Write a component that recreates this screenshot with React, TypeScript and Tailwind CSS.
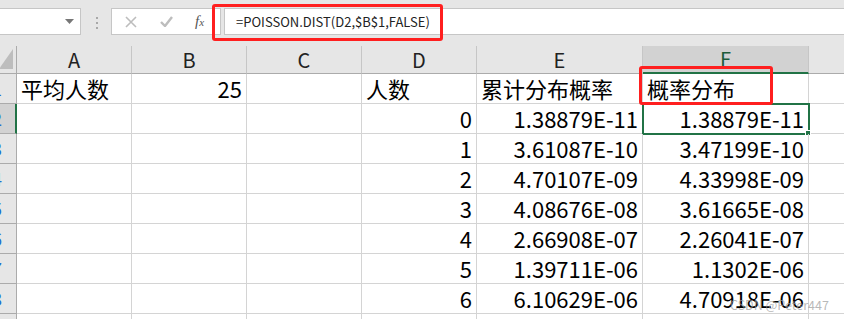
import React from 'react';

const font = "font-['Noto_Sans_CJK_SC',sans-serif]";

const cols = [
    { key: 'A', w: 'w-[115px]' },
    { key: 'B', w: 'w-[115px]' },
    { key: 'C', w: 'w-[115px]' },
    { key: 'D', w: 'w-[115px]' },
    { key: 'E', w: 'w-[166px]' },
    { key: 'F', w: 'w-[166px]' },
];

type Cell = { v: string; right?: boolean };

const t = (v: string): Cell => ({ v });
const n = (v: string): Cell => ({ v, right: true });
const e: Cell = { v: '' };

const rows: Cell[][] = [
    [t('平均人数'), n('25'), e, t('人数'), t('累计分布概率'), t('概率分布')],
    [e, e, e, n('0'), n('1.38879E-11'), n('1.38879E-11')],
    [e, e, e, n('1'), n('3.61087E-10'), n('3.47199E-10')],
    [e, e, e, n('2'), n('4.70107E-09'), n('4.33998E-09')],
    [e, e, e, n('3'), n('4.08676E-08'), n('3.61665E-08')],
    [e, e, e, n('4'), n('2.66908E-07'), n('2.26041E-07')],
    [e, e, e, n('5'), n('1.39711E-06'), n('1.1302E-06')],
    [e, e, e, n('6'), n('6.10629E-06'), n('4.70918E-06')],
    [e, e, e, e, e, e],
];

function FormulaBar() {
    return (
        <div className="flex flex-row items-start h-[46px] pt-[8px] bg-[#e6e6e6]">
            <div className="flex flex-row items-center justify-between w-[81px] h-[27px] bg-white border border-l-0 border-[#c6c6c6] overflow-hidden">
                <span className="-ml-[9px] text-[14px] text-[#1f6fd0]">2</span>
                <svg width="9" height="5" viewBox="0 0 9 5" className="mr-[6px]">
                    <path d="M0 0 L9 0 L4.5 5 Z" fill="#777" />
                </svg>
            </div>
            <div className="flex flex-col gap-[3px] ml-[15px] mr-[13px] mt-[9px]">
                <span className="w-[2px] h-[2px] bg-[#a8a8a8]" />
                <span className="w-[2px] h-[2px] bg-[#a8a8a8]" />
                <span className="w-[2px] h-[2px] bg-[#a8a8a8]" />
            </div>
            <div className="flex flex-row items-center w-[110px] h-[27px] bg-white border border-[#c6c6c6]">
                <svg width="12" height="12" viewBox="0 0 12 12" className="ml-[13px]">
                    <path d="M1 1 L11 11 M11 1 L1 11" stroke="#bdbdbd" strokeWidth="1.6" />
                </svg>
                <svg width="13" height="11" viewBox="0 0 13 11" className="ml-[23px]">
                    <path d="M1 6 L5 10 L12 1" stroke="#bdbdbd" strokeWidth="2.4" fill="none" />
                </svg>
                <span className="ml-[22px] font-['Liberation_Serif',serif] italic text-[15px] text-[#555] leading-none">
                    f<span className="text-[11px]">x</span>
                </span>
            </div>
            <div className="flex-1 flex flex-row items-center ml-[3px] h-[27px] bg-white border border-r-0 border-[#c6c6c6] pl-[11px]">
                <span className={`${font} text-[13px] text-[#222]`}>=POISSON.DIST(D2,$B$1,FALSE)</span>
            </div>
        </div>
    );
}

function HeaderRow() {
    return (
        <div className={`flex flex-row h-[28px] bg-[#e6e6e6] ${font}`}>
            <div className="flex items-end w-[17px] h-full border-r border-b border-[#ababab] overflow-hidden">
                <svg width="14" height="20" viewBox="0 0 14 20" className="mb-[4px] -ml-[1px]">
                    <path d="M14 0 L14 20 L0 20 Z" fill="#bdbdbd" />
                </svg>
            </div>
            {cols.map((c) => (
                <div
                    key={c.key}
                    className={
                        c.key === 'F'
                            ? `${c.w} h-full flex items-center justify-center bg-[#d2d2d2] border-r border-[#c6c6c6] border-b-2 border-b-[#217346] text-[20px] text-[#1d5c3a]`
                            : `${c.w} h-full flex items-center justify-center border-r border-[#c6c6c6] border-b border-b-[#ababab] text-[20px] text-[#222]`
                    }
                >
                    {c.key}
                </div>
            ))}
            <div className="flex-1 h-full border-b border-[#ababab]" />
        </div>
    );
}

function Row({ cells, index }: { cells: Cell[]; index: number }) {
    const selectedRow = index === 1;
    return (
        <div className={`flex flex-row h-[30px] shrink-0 ${font}`}>
            <div
                className={
                    selectedRow
                        ? 'flex items-center w-[17px] h-full bg-[#d2d2d2] border-r-2 border-r-[#217346] border-b border-[#ababab] overflow-hidden'
                        : 'flex items-center w-[17px] h-full bg-[#e6e6e6] border-r border-b border-[#ababab] overflow-hidden'
                }
            >
                <span className="-ml-[8px] text-[18px] text-[#1f6fd0]">{index + 1}</span>
            </div>
            {cells.map((cell, i) => {
                const selected = index === 1 && i === 5;
                return (
                    <div
                        key={i}
                        className={`${cols[i].w} relative h-full flex items-end px-[4px] pb-[1px] border-r border-b border-[#d4d4d4] text-[22px] leading-[27px] text-black whitespace-nowrap ${
                            cell.right ? 'justify-end' : 'justify-start'
                        } ${selected ? 'outline-2 outline-[#217346] -outline-offset-1' : ''}`}
                    >
                        {cell.v}
                        {selected && (
                            <span className="absolute -right-[3px] -bottom-[3px] w-[6px] h-[6px] bg-[#217346] border border-white" />
                        )}
                    </div>
                );
            })}
            <div className="flex-1 h-full border-b border-[#d4d4d4]" />
        </div>
    );
}

export default function App() {
    return (
        <div className="relative w-[844px] h-[319px] overflow-hidden bg-white">
            <FormulaBar />
            <HeaderRow />
            <div className="flex flex-col">
                {rows.map((r, i) => (
                    <Row key={i} cells={r} index={i} />
                ))}
            </div>
            <div className="absolute left-[212px] top-[4px] w-[231px] h-[37px] border-[3px] border-[#ff1f1f] rounded-[3px]" />
            <div className="absolute left-[639px] top-[66px] w-[134px] h-[39px] border-[3px] border-[#ff1f1f] rounded-[3px]" />
            <div className={`absolute left-[730px] top-[296px] text-[12.5px] text-[#9a9a9a]/70 ${font}`}>CSDN @Peter447</div>
        </div>
    );
}
